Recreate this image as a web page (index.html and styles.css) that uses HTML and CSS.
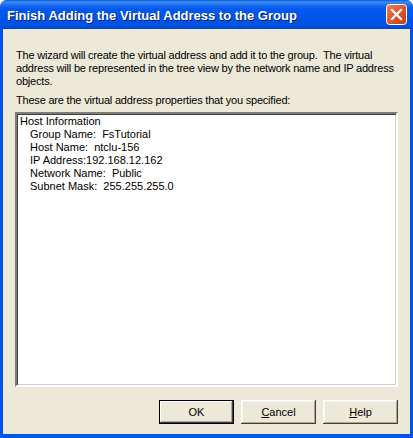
FILE: index.html
```html
<!DOCTYPE html>
<html>
<head>
<meta charset="utf-8">
<link rel="stylesheet" href="styles.css">
</head>
<body>
<div class="window">
  <div class="titlebar">
    <span class="title">Finish Adding the Virtual Address to the Group</span>
    <span class="close">
      <svg width="21" height="21" viewBox="0 0 21 21">
        <defs>
          <linearGradient id="cg" x1="0" y1="0" x2="1" y2="1">
            <stop offset="0" stop-color="#e9825f"/>
            <stop offset="0.5" stop-color="#e0562e"/>
            <stop offset="1" stop-color="#c23a12"/>
          </linearGradient>
        </defs>
        <rect x="0.5" y="0.5" width="20" height="20" rx="3" fill="url(#cg)" stroke="#fff"/>
        <path d="M6 6 L15 15 M15 6 L6 15" stroke="#fff" stroke-width="2.2" stroke-linecap="square"/>
      </svg>
    </span>
  </div>
  <div class="client">
    <p class="intro">The wizard will create the virtual address and add it to the group.&nbsp; The virtual<br>address will be represented in the tree view by the network name and IP address<br>objects.</p>
    <p class="label">These are the virtual address properties that you specified:</p>
    <div class="box">
      <div>Host Information</div>
      <div class="ind">Group Name:&nbsp; FsTutorial</div>
      <div class="ind">Host Name:&nbsp; ntclu-156</div>
      <div class="ind">IP Address:192.168.12.162</div>
      <div class="ind">Network Name:&nbsp; Public</div>
      <div class="ind">Subnet Mask:&nbsp; 255.255.255.0</div>
    </div>
    <div class="buttons">
      <button class="btn default">OK</button>
      <button class="btn"><u>C</u>ancel</button>
      <button class="btn"><u>H</u>elp</button>
    </div>
  </div>
</div>
</body>
</html>
```

FILE: styles.css
```css
html, body {
  margin: 0;
  padding: 0;
  background: #fff;
}
.window {
  width: 413px;
  height: 438px;
  box-sizing: border-box;
  display: flex;
  flex-direction: column;
  background: #0055e5;
  border-radius: 7px 7px 0 0;
  overflow: hidden;
  padding: 0 3px 4px 3px;
}
.titlebar {
  height: 29px;
  flex: none;
  display: flex;
  align-items: center;
  justify-content: space-between;
  margin: 0 -3px;
  padding: 0 6px 0 7px;
  background: linear-gradient(to bottom, #0a5bd8 0px, #3b8cf5 2px, #1e6ef0 5px, #0058ee 9px, #0055e8 20px, #0051de 26px, #0044cc 29px);
}
.title {
  font-family: "Liberation Sans", Arial, sans-serif;
  font-weight: bold;
  font-size: 13px;
  color: #fff;
  text-shadow: 1px 1px 0 #0a1e6e;
  margin-top: 1px;
}
.close {
  display: flex;
  width: 21px;
  height: 21px;
}
.client {
  flex: 1;
  background: #ece9d8;
  display: flex;
  flex-direction: column;
  padding: 20px 12px 10px 12px;
  font-family: "Liberation Sans", Arial, sans-serif;
  font-size: 11px;
  line-height: 13px;
  color: #000;
}
.intro {
  margin: 0 0 6px 1px;
  letter-spacing: -0.2px;
  white-space: nowrap;
}
.label {
  margin: 0 0 5px 1px;
  letter-spacing: -0.2px;
}
.box {
  flex: 1;
  background: #fff;
  border-style: solid;
  border-width: 2px;
  border-color: #7f7d75 #fff #fff #7f7d75;
  box-shadow: inset 1px 1px 0 #404040, inset -1px -1px 0 #d4d0c8;
  padding: 1px 3px;
}
.ind {
  padding-left: 10px;
}
.buttons {
  display: flex;
  justify-content: flex-end;
  gap: 7px;
  margin-top: 13px;
  flex: none;
}
.btn {
  width: 75px;
  height: 24px;
  box-sizing: border-box;
  background: #ece9d8;
  font-family: "Liberation Sans", Arial, sans-serif;
  font-size: 11px;
  color: #000;
  border: none;
  padding: 0;
  box-shadow: inset -1px -1px 0 #404040, inset 1px 1px 0 #fff, inset -2px -2px 0 #aca899, inset 2px 2px 0 #f5f4ee;
}
.btn.default {
  border: 1px solid #000;
  box-shadow: inset -1px -1px 0 #404040, inset 1px 1px 0 #fff, inset -2px -2px 0 #aca899;
}
.btn u {
  text-decoration: underline;
}
```
